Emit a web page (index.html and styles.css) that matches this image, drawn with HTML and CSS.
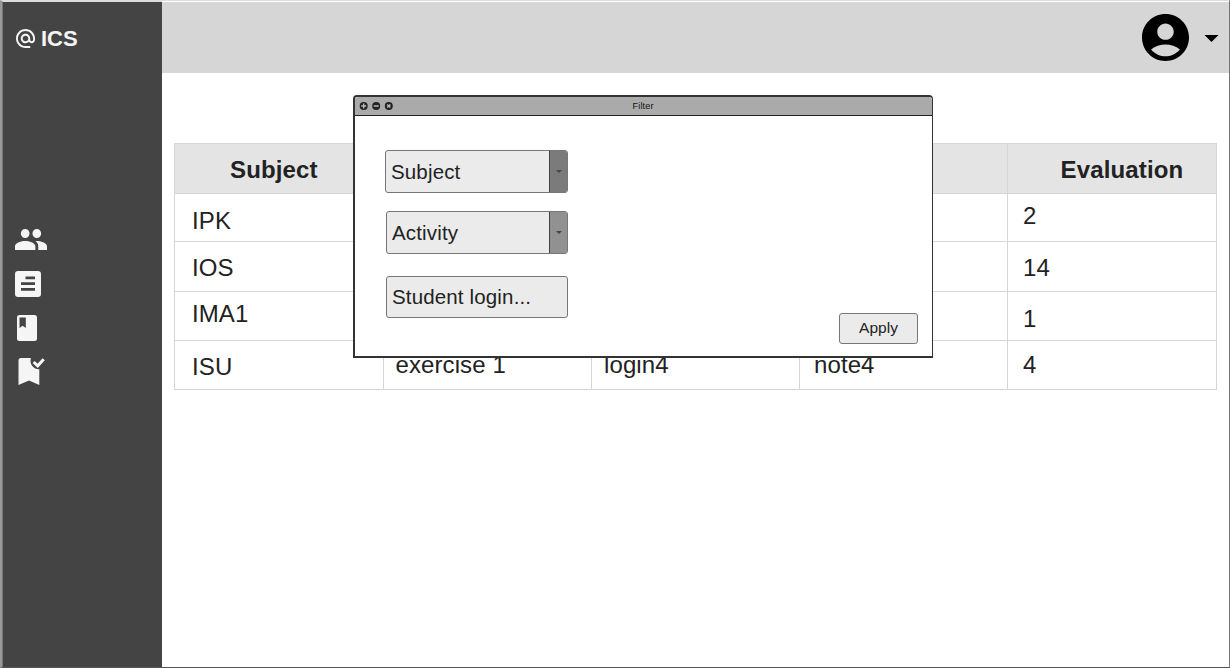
FILE: index.html
```html
<!DOCTYPE html>
<html lang="en">
<head>
<meta charset="utf-8">
<title>ICS</title>
<link rel="stylesheet" href="styles.css">
</head>
<body>
<div class="app">
  <nav class="sidebar">
    <div class="brand">
      <svg class="brand-icon" viewBox="2 2 20 20"><path fill="currentColor" d="M12 2C6.48 2 2 6.48 2 12s4.480 10 10 10h5v-2h-5c-4.34 0-8-3.66-8-8s3.66-8 8-8 8 3.66 8 8v1.430c0 .790-.710 1.570-1.500 1.570s-1.500-.780-1.500-1.570V12c0-2.760-2.240-5-5-5s-5 2.240-5 5 2.240 5 5 5c1.380 0 2.640-.560 3.540-1.470.650.890 1.770 1.470 2.960 1.470 1.970 0 3.500-1.600 3.500-3.570V12c0-5.520-4.480-10-10-10zm0 13c-1.660 0-3-1.340-3-3s1.340-3 3-3 3 1.340 3 3-1.340 3-3 3z"/></svg>
      <span>ICS</span>
    </div>
    <svg class="nav-icon people" viewBox="1 5 22 14" preserveAspectRatio="none"><path fill="currentColor" d="M16 11c1.660 0 2.990-1.340 2.990-3S17.660 5 16 5s-3 1.340-3 3 1.340 3 3 3zm-8 0c1.660 0 2.990-1.340 2.990-3S9.660 5 8 5 5 6.340 5 8s1.340 3 3 3zm0 2c-2.330 0-7 1.170-7 3.500V19h14v-2.500c0-2.330-4.670-3.500-7-3.500zm8 0c-.290 0-.620.020-.970.050 1.160.840 1.970 1.970 1.970 3.450V19h6v-2.500c0-2.330-4.670-3.500-7-3.500z"/></svg>
    <svg class="nav-icon article" viewBox="0 0 26 26"><rect width="26" height="26" rx="3" fill="currentColor"/><path class="ink" d="M10.500 5.500h9.500v2.700h-9.500zM6 11.200h14v2.700H6zM6 17h14v2.700H6z"/></svg>
    <svg class="nav-icon book" viewBox="0 0 20 26"><rect width="20" height="26" rx="2.500" fill="currentColor"/><path class="ink" d="M2.500 2.500h6.300v10.500L5.600 10.700l-3.100 2.300z"/></svg>
    <svg class="nav-icon bookmark" viewBox="0 0 27 28"><path fill="currentColor" d="M3 1h10A8.300 8.300 0 0 0 21.300 12.200V28L11 23.500.5 28V3.500A2.500 2.500 0 0 1 3 1z"/><path fill="none" stroke="currentColor" stroke-width="3" d="M15.600 5l4.100 3.800 6-6.600"/></svg>
  </nav>
  <div class="page">
    <header class="topbar">
      <svg class="avatar" viewBox="2 2 20 20"><path d="M12 2C6.480 2 2 6.480 2 12s4.480 10 10 10 10-4.480 10-10S17.520 2 12 2zm0 4c1.930 0 3.500 1.570 3.500 3.500S13.930 13 12 13s-3.500-1.570-3.500-3.500S10.070 6 12 6zm0 14c-2.030 0-4.430-.820-6.140-2.880a9.947 9.947 0 0 1 12.280 0C16.430 19.180 14.030 20 12 20z"/></svg>
      <svg class="caret" viewBox="0 0 14 7"><path d="M0 0h14L7 7z"/></svg>
    </header>
    <main class="content">
      <div class="table">
        <div class="row head"><div class="cell">Subject</div><div class="cell"></div><div class="cell"></div><div class="cell"></div><div class="cell evaluation">Evaluation</div></div>
        <div class="row r1"><div class="cell">IPK</div><div class="cell"></div><div class="cell"></div><div class="cell"></div><div class="cell value">2</div></div>
        <div class="row r2"><div class="cell">IOS</div><div class="cell"></div><div class="cell"></div><div class="cell"></div><div class="cell value">14</div></div>
        <div class="row r3"><div class="cell">IMA1</div><div class="cell"></div><div class="cell"></div><div class="cell"></div><div class="cell value">1</div></div>
        <div class="row r4"><div class="cell">ISU</div><div class="cell activity">exercise 1</div><div class="cell login">login4</div><div class="cell note">note4</div><div class="cell value">4</div></div>
      </div>
    </main>
  </div>
</div>
<section class="dialog">
  <div class="titlebar">
    <svg class="controls" viewBox="0 0 34 10"><g fill="#222"><circle cx="4.700" cy="5" r="4"/><circle cx="17.200" cy="5" r="4"/><circle cx="29.800" cy="5" r="4"/></g><path stroke="#bbb" stroke-width="1.400" d="M2.200 5h5M4.700 2.500v5M14.700 5h5M28.200 3.400l3.200 3.200M31.400 3.400l-3.200 3.200"/></svg>
    <span class="title">Filter</span>
  </div>
  <div class="form">
    <div class="select"><span>Subject</span><div class="arrow dark"><svg viewBox="0 0 6 3"><path d="M0 0h6L3 3z"/></svg></div></div>
    <div class="select second"><span>Activity</span><div class="arrow"><svg viewBox="0 0 6 3"><path d="M0 0h6L3 3z"/></svg></div></div>
    <div class="field">Student login...</div>
    <button class="apply">Apply</button>
  </div>
</section>
</body>
</html>
```
FILE: styles.css
```css
* { box-sizing: border-box; }
body {
  margin: 0;
  width: 1230px;
  height: 668px;
  overflow: hidden;
  font-family: "Liberation Sans", Arial, sans-serif;
  color: #222;
  background: #fff;
}
.app {
  display: flex;
  height: 668px;
  border-style: solid;
  border-width: 1px 1px 1px 2px;
  border-color: #ddd #777 #555 #999;
}
.sidebar {
  width: 160px;
  padding: 0 0 0 12px;
  background: #444;
  border-left: 1px solid #777;
  border-top: 1px solid #ddd;
  color: #f5f5f5;
  display: flex;
  flex-direction: column;
  align-items: flex-start;
}
.brand {
  display: flex;
  align-items: center;
  height: 26px;
  margin-top: 23px;
  font-size: 22px;
  font-weight: bold;
}
.brand span { padding-top: 1px; }
.brand-icon { width: 19px; height: 19px; margin: 0 6px 0 1px; }
.nav-icon { display: block; }
.ink { fill: #444; }
.people { width: 32px; height: 21px; margin-top: 178px; }
.article { width: 26px; height: 26px; margin-top: 21px; }
.book { width: 20px; height: 26px; margin: 18px 0 0 2px; }
.bookmark { width: 27px; height: 28px; margin: 16px 0 0 2.5px; }
.page { flex: 1; }
.topbar {
  display: flex;
  align-items: center;
  justify-content: flex-end;
  gap: 15px;
  height: 72px;
  padding-right: 10px;
  background: #d6d6d6;
  border-top: 1px solid #fff;
}
.avatar { width: 47px; height: 47px; }
.caret { width: 15px; height: 7px; margin-top: 2px; }
.content { padding: 70px 0 0 12px; }
.table {
  width: 1043px;
  border: solid #d6d6d6;
  border-width: 1px 0 0 1px;
  font-size: 24px;
  letter-spacing: 0.1px;
}
.row { display: grid; grid-template-columns: 209px 208px 208px 208px 209px; height: 49px; }
.cell {
  border: solid #d6d6d6;
  border-width: 0 1px 1px 0;
  padding: 0 0 0 17px;
  line-height: 28px;
  white-space: nowrap;
}
.head { height: 50px; background: #e4e4e4; font-weight: bold; }
.head .cell { padding: 12px 0 0 55px; letter-spacing: 0.15px; }
.head .evaluation { padding-left: 52.5px; }
.row.r1 { height: 48px; }
.r1 .cell { padding-top: 13px; }
.row.r2 { height: 50px; }
.r2 .cell { padding-top: 12px; }
.r3 .cell { padding-top: 8px; }
.r4 .cell { padding-top: 12px; }
.row .value { padding-left: 15px; }
.r1 .value { padding-top: 8px; }
.r3 .value { padding-top: 13px; }
.r4 .value { padding-top: 10px; }
.r4 .activity { padding: 10px 0 0 11.5px; }
.r4 .login { padding: 10px 0 0 12px; }
.r4 .note { padding: 10px 0 0 14px; }
.dialog {
  position: absolute;
  left: 353px;
  top: 95px;
  width: 580px;
  height: 263px;
  border: 2px solid #333;
  border-width: 2px 1px 2px 2px;
  border-radius: 4px 4px 0 0;
  background: #fff;
}
.titlebar {
  display: flex;
  align-items: center;
  height: 19px;
  padding: 0 0 1px 4px;
  background: #aaa;
  border-bottom: 1.5px solid #222;
  border-radius: 3px 3px 0 0;
}
.controls { width: 34px; height: 10px; }
.title { margin-left: 239.5px; font-size: 9px; letter-spacing: 0.2px; color: #111; }
.form {
  display: flex;
  flex-direction: column;
  align-items: flex-start;
  padding: 34px 0 0 30px;
  font-size: 20.5px;
  letter-spacing: 0.15px;
}
.select, .field {
  width: 183px;
  height: 43px;
  border: 1px solid #777;
  border-radius: 3px;
  background: #ebebeb;
  line-height: 41px;
  padding-left: 5px;
}
.select { display: flex; justify-content: space-between; overflow: hidden; }
.arrow {
  width: 18px;
  display: flex;
  align-items: center;
  justify-content: center;
  background: #919191;
  border-left: 1px solid #444;
}
.arrow.dark { background: #7b7b7b; }
.arrow svg { width: 6px; height: 3px; fill: #444; }
.second { width: 182px; margin: 18px 0 0 1px; }
.field { width: 182px; height: 42px; margin: 22px 0 0 1px; line-height: 40px; }
.apply {
  align-self: flex-end;
  width: 79px;
  height: 31px;
  margin: -5px 14px 0 0;
  padding: 0 0 2px;
  border: 1px solid #777;
  border-radius: 3px;
  background: #ebebeb;
  color: #222;
  font: 15.5px/27px "Liberation Sans", Arial, sans-serif;
}
```
